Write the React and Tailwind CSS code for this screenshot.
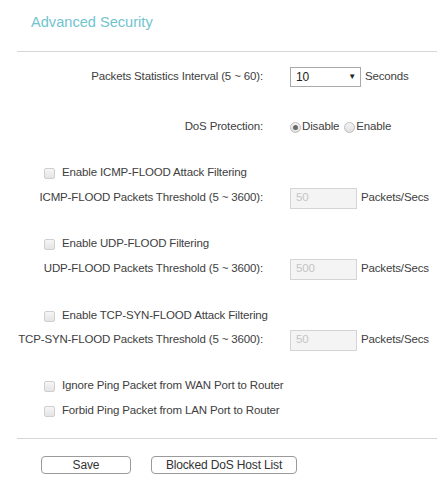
import React from "react";

const font = { fontFamily: '"Liberation Sans", Arial, sans-serif' };

function Checkbox() {
  return (
    <span className="inline-block w-[11px] h-[11px] rounded-[2px] border border-[#cfcfcf] bg-gradient-to-b from-[#f6f6f6] to-[#e4e4e4] shrink-0" />
  );
}

function Radio({ checked }) {
  return (
    <span className="inline-flex items-center justify-center w-[11px] h-[11px] rounded-full border border-[#bdbdbd] bg-gradient-to-b from-[#f4f4f4] to-[#e0e0e0] shrink-0">
      {checked && <span className="block w-[5px] h-[5px] rounded-full bg-[#6a6a6a]" />}
    </span>
  );
}

function LabelRow({ label, children, className = "" }) {
  return (
    <div className={"flex items-center h-5 " + className}>
      <div className="w-[263px] shrink-0 text-right whitespace-nowrap">{label}</div>
      <div className="flex items-center pl-[27px]">{children}</div>
    </div>
  );
}

function CheckRow({ label, className = "" }) {
  return (
    <div className={"flex items-center h-5 pl-[44px] " + className}>
      <Checkbox />
      <span className="ml-[7px] whitespace-nowrap">{label}</span>
    </div>
  );
}

function Threshold({ value }) {
  return (
    <>
      <div className="w-[67px] h-[21px] border border-[#d4d4d4] bg-[#f4f4f4] text-[#c4c4c4] flex items-center pl-[5px]">
        {value}
      </div>
      <span className="ml-[4px] whitespace-nowrap">Packets/Secs</span>
    </>
  );
}

export default function App() {
  return (
    <div className="w-[437px] h-[480px] bg-white text-[11.5px] tracking-[-0.15px] text-[#404040] overflow-hidden" style={font}>
      <div className="h-[51px] pl-[31px] pt-[12px] text-[14.6px] tracking-normal leading-[20px] text-[#6fc4cd]">
        Advanced Security
      </div>
      <div className="ml-[17px] border-t border-[#d6d6d6]" />

      <LabelRow label="Packets Statistics Interval (5 ~ 60):" className="mt-[15px]">
        <div className="w-[71px] h-[20px] border border-[#a9a9a9] bg-white flex items-center justify-between pl-[5px] pr-[4px] text-[12px] text-[#222]">
          <span>10</span>
          <span className="text-[8px] text-[#222]">▼</span>
        </div>
        <span className="ml-[4px]">Seconds</span>
      </LabelRow>

      <LabelRow label="DoS Protection:" className="mt-[30px]">
        <Radio checked />
        <span className="ml-[1px]">Disable</span>
        <span className="ml-[5px]" />
        <Radio />
        <span className="ml-[1px]">Enable</span>
      </LabelRow>

      <CheckRow label="Enable ICMP-FLOOD Attack Filtering" className="mt-[26px]" />
      <LabelRow label="ICMP-FLOOD Packets Threshold (5 ~ 3600):" className="mt-[5px]">
        <Threshold value="50" />
      </LabelRow>

      <CheckRow label="Enable UDP-FLOOD Filtering" className="mt-[26px]" />
      <LabelRow label="UDP-FLOOD Packets Threshold (5 ~ 3600):" className="mt-[5px]">
        <Threshold value="500" />
      </LabelRow>

      <CheckRow label="Enable TCP-SYN-FLOOD Attack Filtering" className="mt-[27px]" />
      <LabelRow label="TCP-SYN-FLOOD Packets Threshold (5 ~ 3600):" className="mt-[4px]">
        <Threshold value="50" />
      </LabelRow>

      <CheckRow label="Ignore Ping Packet from WAN Port to Router" className="mt-[26px]" />
      <CheckRow label="Forbid Ping Packet from LAN Port to Router" className="mt-[5px]" />

      <div className="ml-[17px] mt-[17px] border-t border-[#d6d6d6]" />

      <div className="flex items-center pl-[41px] mt-[17px] gap-[20px]">
        <button className="w-[90px] h-[18px] rounded-[4px] border border-[#9a9a9a] bg-white text-[12px] text-[#333] leading-none">
          Save
        </button>
        <button className="w-[146px] h-[18px] rounded-[4px] border border-[#9a9a9a] bg-white text-[12px] text-[#333] leading-none">
          Blocked DoS Host List
        </button>
      </div>
    </div>
  );
}
